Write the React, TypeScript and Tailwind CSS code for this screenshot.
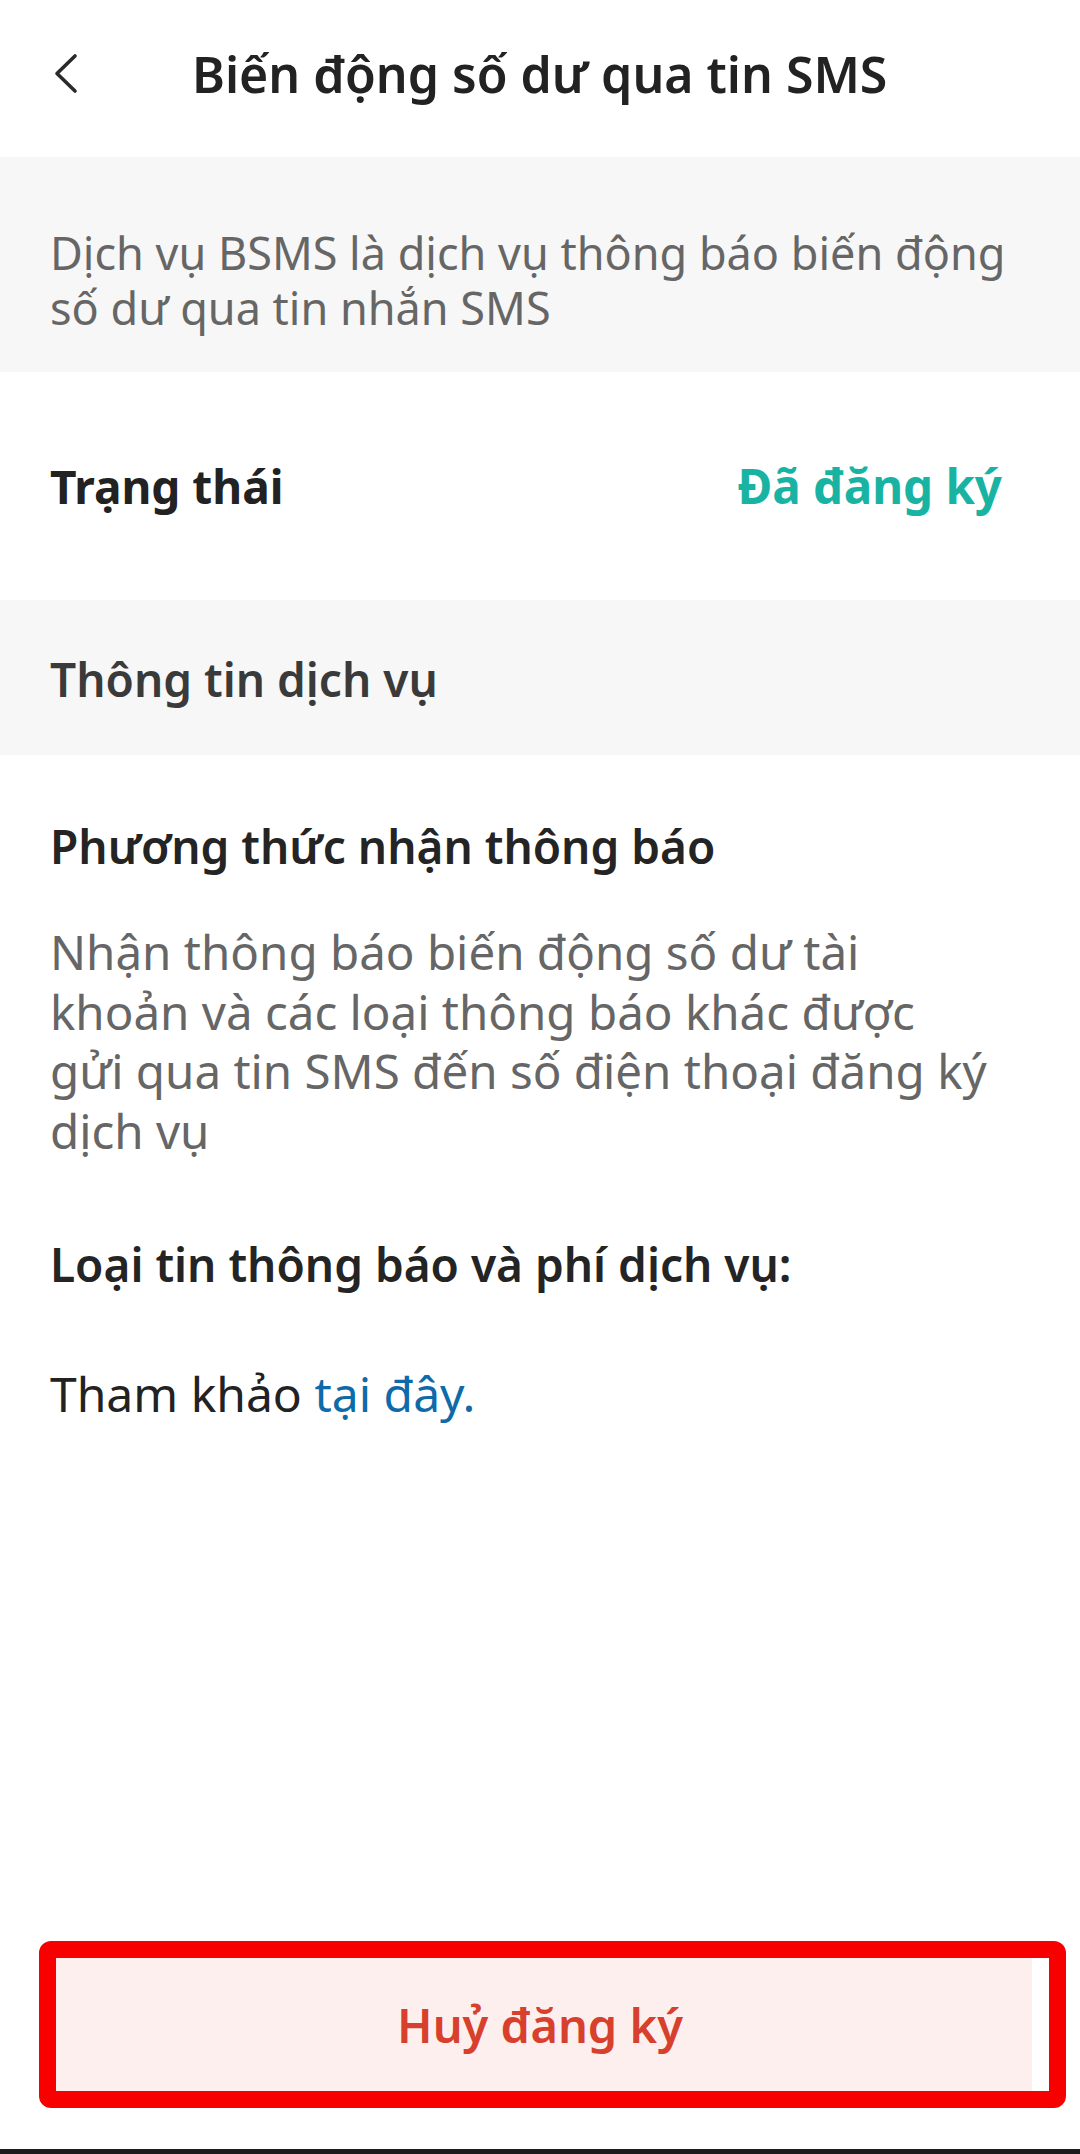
import { ReactNode } from 'react';

const font = { fontFamily: '"Noto Sans", "Open Sans", sans-serif' };

function Heading({ children, className = '' }: { children: ReactNode; className?: string }) {
  return (
    <h3 className={`text-[46px] leading-[46px] font-semibold text-[#242424] ${className}`}>{children}</h3>
  );
}

export default function App() {
  return (
    <div style={font} className="relative flex h-[2154px] w-[1080px] flex-col overflow-hidden bg-white">
      {/* header */}
      <div className="flex h-[157px] items-center pb-[9px] pl-[52px]">
        <svg width="28" height="44" viewBox="0 0 28 44" fill="none">
          <polyline
            points="23,4 5,21.5 23,39"
            stroke="#2a2a2a"
            strokeWidth="3.6"
            strokeLinecap="round"
            strokeLinejoin="round"
          />
        </svg>
        <h1 className="ml-[112px] text-[50px] leading-[50px] font-semibold text-[#222]">
          Biến động số dư qua tin SMS
        </h1>
      </div>

      {/* intro */}
      <div className="bg-[#f7f7f7] px-[50px] pt-[68px] pb-[37px]">
        <p className="text-[45px] leading-[55px] text-[#666]">
          Dịch vụ BSMS là dịch vụ thông báo biến động
          <br />
          số dư qua tin nhắn SMS
        </p>
      </div>

      {/* status */}
      <div className="flex h-[228px] items-center justify-between pl-[50px] pr-[78px]">
        <span className="text-[46px] leading-[46px] font-bold text-[#222]">Trạng thái</span>
        <span className="text-[47.5px] leading-[46px] font-bold text-[#19b3a3]">Đã đăng ký</span>
      </div>

      {/* section title */}
      <div className="bg-[#f7f7f7] px-[50px] pt-[56px] pb-[53px]">
        <h2 className="text-[46px] leading-[46px] font-semibold text-[#3a3a3a]">Thông tin dịch vụ</h2>
      </div>

      {/* details */}
      <div className="flex flex-col px-[50px] pt-[68px]">
        <Heading>Phương thức nhận thông báo</Heading>
        <p className="mt-[53px] text-[47.5px] leading-[59.5px] text-[#666]">
          Nhận thông báo biến động số dư tài
          <br />
          khoản và các loại thông báo khác được
          <br />
          gửi qua tin SMS đến số điện thoại đăng ký
          <br />
          dịch vụ
        </p>
        <Heading className="mt-[81px] text-[46.5px]">Loại tin thông báo và phí dịch vụ:</Heading>
        <p className="mt-[83px] text-[48px] leading-[48px] text-[#222]">
          Tham khảo <a className="text-[#0e6aa8]">tại đây.</a>
        </p>
      </div>

      {/* bottom action */}
      <div className="mt-auto px-[48px] pb-[49px]">
        <div className="relative">
          <button className="flex h-[150px] w-[984px] items-center justify-center rounded-[12px] bg-[#fdefee] text-[47px] leading-[47px] font-semibold text-[#d7402c]">
            Huỷ đăng ký
          </button>
          <div className="pointer-events-none absolute top-[-9px] right-[-34px] bottom-[-8px] left-[-9px] rounded-[12px] border-[17px] border-[#f80000]" />
        </div>
      </div>
      <div className="h-[5px] bg-[#1c1c1c]" />
    </div>
  );
}
